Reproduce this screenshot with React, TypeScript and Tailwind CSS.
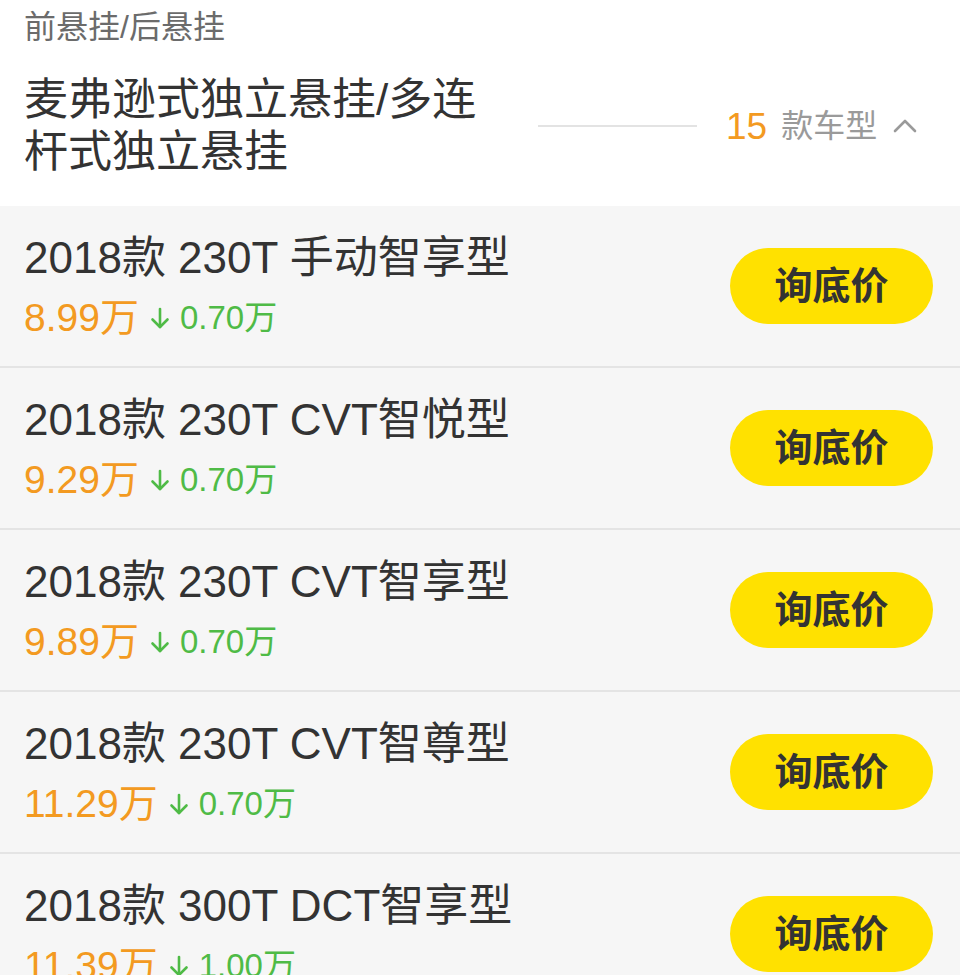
import React from "react";

const models = [
  { name: "2018款 230T 手动智享型", price: "8.99万", cut: "0.70万" },
  { name: "2018款 230T CVT智悦型", price: "9.29万", cut: "0.70万" },
  { name: "2018款 230T CVT智享型", price: "9.89万", cut: "0.70万" },
  { name: "2018款 230T CVT智尊型", price: "11.29万", cut: "0.70万" },
  { name: "2018款 300T DCT智享型", price: "11.39万", cut: "1.00万" },
];

function DownArrow() {
  return (
    <svg width="20" height="22" viewBox="0 0 20 22" fill="none" stroke="#4fbb46" strokeWidth="2.6" strokeLinecap="round" strokeLinejoin="round">
      <path d="M10 2v18" />
      <path d="M2.5 12.5 10 20l7.5-7.5" />
    </svg>
  );
}

export default function App() {
  return (
    <div className="w-[960px] h-[975px] overflow-hidden bg-[#f6f6f6] font-['Liberation_Sans','Noto_Sans_CJK_SC',sans-serif]">
      {/* 头部：悬挂信息 */}
      <div className="bg-white px-6 pt-[4px] pb-[28px]">
        <div className="text-[32px] leading-[46px] text-[#6b6b6b]">前悬挂/后悬挂</div>
        <div className="mt-[24px] flex items-center">
          <div className="w-[470px] flex-none text-[44px] leading-[52px] text-[#333]">
            麦弗逊式独立悬挂/多连杆式独立悬挂
          </div>
          <div className="ml-[44px] h-[2px] w-[159px] bg-[#e3e3e3]"></div>
          <div className="ml-[29px] flex items-center">
            <span className="text-[37px] leading-none text-[#f39a21]">15</span>
            <span className="ml-[14px] text-[32px] leading-none text-[#9a9a9a]">款车型</span>
            <svg className="ml-[16px]" width="24" height="14" viewBox="0 0 24 14" fill="none" stroke="#9a9a9a" strokeWidth="2.6" strokeLinecap="round" strokeLinejoin="round">
              <path d="M2 12 12 2l10 10" />
            </svg>
          </div>
        </div>
      </div>

      {/* 车型列表 */}
      <ul>
        {models.map((m) => (
          <li key={m.name} className="flex h-[162px] flex-none items-center justify-between border-b-2 border-[#e4e4e4] pl-6 pr-[27px]">
            <div className="flex flex-col">
              <div className="text-[44px] leading-[52px] text-[#333]">{m.name}</div>
              <div className="mt-[12px] flex items-center leading-[44px]">
                <span className="text-[39px] text-[#f39a21]">{m.price}</span>
                <span className="ml-[11px] mr-[10px] flex items-center">
                  <DownArrow />
                </span>
                <span className="text-[33px] text-[#4fbb46]">{m.cut}</span>
              </div>
            </div>
            <button className="flex h-[76px] w-[203px] items-center justify-center rounded-full bg-[#ffe100] text-[38px] font-bold text-[#333]">
              询底价
            </button>
          </li>
        ))}
      </ul>
    </div>
  );
}
